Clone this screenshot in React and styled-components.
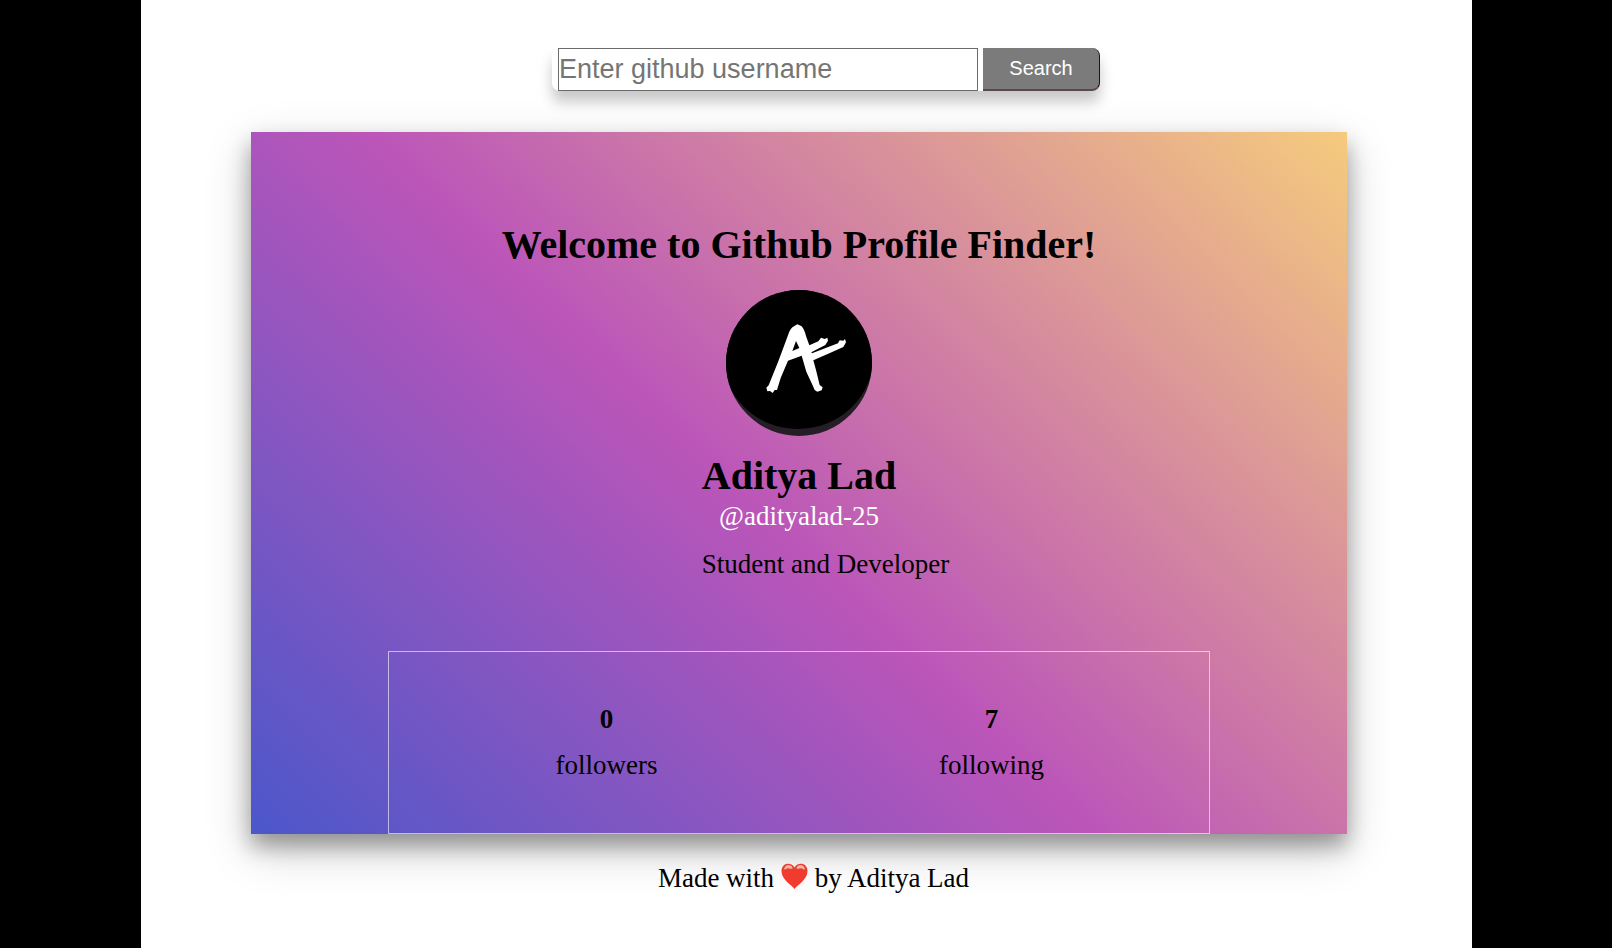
import React from "react";
import styled, { createGlobalStyle } from "styled-components";

const GlobalStyle = createGlobalStyle`
  *, *::before, *::after { box-sizing: border-box; }
  body {
    margin: 0;
    background: #000;
    color: #000;
    font-family: "Liberation Serif", "Times New Roman", serif;
    font-size: 27px;
    line-height: 32px;
  }
  h1, h2, p, dl, dd { margin: 0; }
`;

const Frame = styled.div`
  padding: 0 140px 0 141px;
`;

const Page = styled.div`
  display: flex;
  flex-direction: column;
  align-items: center;
  min-height: 100vh;
  padding: 48px 15px 48px 0;
  background: #fff;
`;

const SearchForm = styled.form`
  display: flex;
  gap: 5px;
  width: 548px;
  max-width: 100%;
  margin-left: 54px;
  padding-left: 6px;
  border-radius: 8px;
  box-shadow: 0 11px 14px rgba(0, 0, 0, 0.22);
  background: #fff;
`;

const SearchInput = styled.input`
  flex: 1;
  min-width: 0;
  height: 43px;
  padding: 0;
  border: 1px solid #6b6b6b;
  border-radius: 0;
  background: #fff;
  font-family: "Liberation Sans", Arial, sans-serif;
  font-size: 27px;

  &::placeholder {
    color: #757575;
    opacity: 1;
  }
`;

const SearchButton = styled.button`
  width: 117px;
  height: 43px;
  padding: 0;
  border: solid;
  border-width: 0 1px 2px 0;
  border-color: #7b7b7b #1c1418 #5a484b #7b7b7b;
  border-radius: 0 8px 8px 0;
  background: #7b7b7b;
  color: #fff;
  font-family: "Liberation Sans", Arial, sans-serif;
  font-size: 20px;
`;

const Card = styled.main`
  display: flex;
  flex-direction: column;
  align-items: center;
  width: 90%;
  max-width: 1096px;
  margin-top: 41px;
  padding-top: 89px;
  background: linear-gradient(44deg, #4b57ca 0%, #bb55b9 46%, #f5cb7d 100%);
  box-shadow: 0 12px 20px rgba(0, 0, 0, 0.32), 0 16px 44px rgba(0, 0, 0, 0.2);
`;

const Title = styled.h1`
  font-size: 40px;
  line-height: 48px;
`;

const Avatar = styled.svg`
  width: 146px;
  height: 146px;
  margin-top: 21px;
`;

const Identity = styled.section`
  display: flex;
  flex-direction: column;
  align-items: center;
  width: min-content;
  margin-top: 16px;
  white-space: nowrap;
`;

const Name = styled.h2`
  font-size: 40px;
  line-height: 48px;
`;

const Handle = styled.a`
  color: #fff;
  text-decoration: none;
`;

const Bio = styled.p`
  align-self: flex-start;
  width: 0;
  margin-top: 16px;
`;

const Stats = styled.dl`
  display: grid;
  grid-template-columns: 1fr 1fr;
  width: 75%;
  margin-top: 71px;
  padding: 51px 25px 52px;
  border: 1px solid rgba(255, 255, 255, 0.6);
`;

const Stat = styled.div`
  display: flex;
  flex-direction: column-reverse;
  align-items: center;
  gap: 14px;
`;

const Count = styled.dd`
  font-weight: bold;
`;

const Footer = styled.footer`
  margin-top: 28px;
  padding-left: 29px;
`;

const Heart = styled.svg`
  width: 27px;
  height: 27px;
  vertical-align: -3px;
`;

const stats = [
  { label: "followers", count: 0 },
  { label: "following", count: 7 },
];

export default function App() {
  return (
    <>
      <GlobalStyle />
      <Frame>
        <Page>
          <SearchForm role="search" onSubmit={(e) => e.preventDefault()}>
            <SearchInput
              type="text"
              name="username"
              aria-label="Github username"
              placeholder="Enter github username"
            />
            <SearchButton type="submit">Search</SearchButton>
          </SearchForm>

          <Card>
            <Title>Welcome to Github Profile Finder!</Title>
            <Avatar viewBox="48 30 438 438" role="img" aria-label="Aditya Lad">
              <defs>
                <clipPath id="disc">
                  <circle cx="267" cy="249" r="219" />
                </clipPath>
              </defs>
              <g clipPath="url(#disc)">
                <rect x="48" y="30" width="438" height="438" fill="#261e26" />
                <ellipse cx="264" cy="230" rx="226" ry="217" fill="#000" />
              </g>
              <path
                fill="#fff"
                fillRule="evenodd"
                d="M169 323 L176 316 L205 244 L234 166 Q240 145 252 139 L262 133 L275 139 Q283 148 288 168 L298 196 L325 184 L333 173 L344 177 L352 173 L354 182 L346 195 L304 217 L306 220 L384 190 L389 181 L400 182 L405 177 L408 187 L400 201 L358 220 L310 241 L318 270 L329 315 L338 322 L335 331 L322 335 L314 330 L306 312 L289 275 L275 227 L234 242 L212 294 L201 330 L194 330 L188 339 L180 333 L172 334 Z M258 183 L247 213 L268 204 Z"
              />
            </Avatar>
            <Identity>
              <Name>Aditya Lad</Name>
              <Handle href="#adityalad-25">@adityalad-25</Handle>
              <Bio>Student and Developer</Bio>
            </Identity>
            <Stats>
              {stats.map(({ label, count }) => (
                <Stat key={label}>
                  <dt>{label}</dt>
                  <Count>{count}</Count>
                </Stat>
              ))}
            </Stats>
          </Card>

          <Footer>
            Made with{" "}
            <Heart viewBox="0 0 27 27" role="img" aria-label="love">
              <path
                fill="#f23b2f"
                d="M13.5 26 C11 22 0.5 17 0.5 8 C0.5 3.5 3.5 0.8 7 0.8 C10 0.8 12.4 2.5 13.5 4.5 C14.6 2.5 17 0.8 20 0.8 C23.5 0.8 26.5 3.5 26.5 8 C26.5 17 16 22 13.5 26 Z"
              />
              <path
                fill="#e8b9a8"
                d="M3 6 C4 3.2 5.4 2 7.2 2 C9.4 2 11 3.2 11.6 5.2 C10 6.4 8 5 6.2 5.4 C4.6 5.8 4 7.2 3 6 Z M15.4 5.2 C16 3.2 17.6 2 19.8 2 C21.6 2 23 3.2 24 6 C23 7.2 22.4 5.8 20.8 5.4 C19 5 17 6.4 15.4 5.2 Z"
              />
            </Heart>{" "}
            by Aditya Lad
          </Footer>
        </Page>
      </Frame>
    </>
  );
}
